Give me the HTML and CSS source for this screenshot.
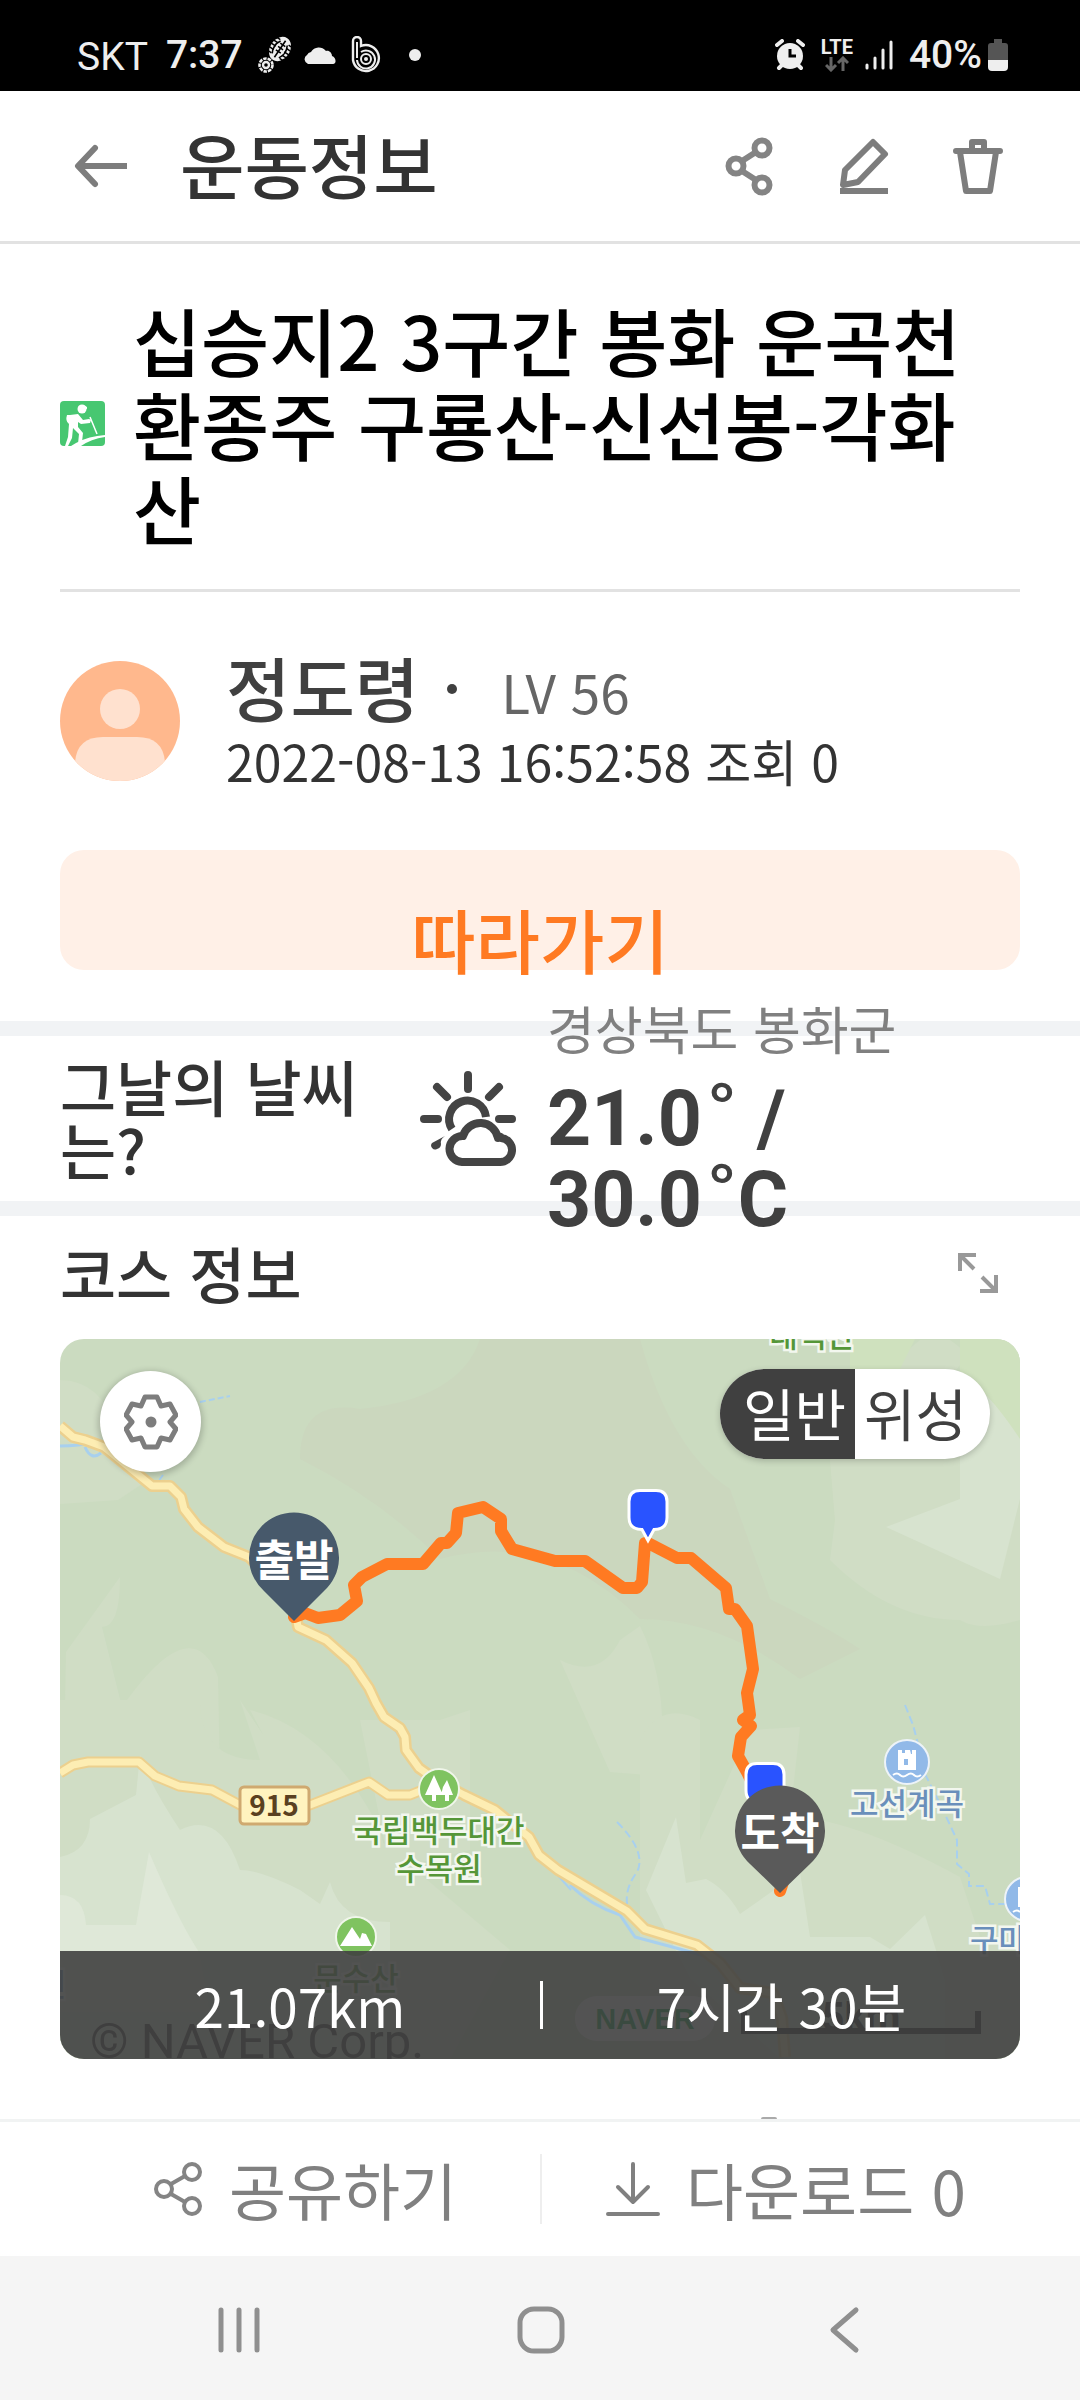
FILE: index.html
```html
<!DOCTYPE html>
<html lang="ko">
<head>
<meta charset="utf-8">
<meta name="viewport" content="width=device-width, initial-scale=1">
<title>운동정보</title>
<link rel="stylesheet" href="styles.css">
</head>
<body>
<div class="app">
  <div class="status">
    <div class="status-group">
      <span class="carrier">SKT</span>
      <span class="clock">7:37</span>
      <svg class="foot" width="36" height="38" viewBox="0 0 36 38" aria-hidden="true">
        <g transform="rotate(34 23 13)">
          <ellipse cx="23" cy="13" rx="10" ry="13" fill="#eee"/>
          <path d="M23 3v20M19 6c-3 5-3 10 0 15M27 6c3 5 3 10 0 15" stroke="#000" stroke-width="1.6" fill="none"/>
          <path d="M12 5h6M12 9h6M12 13h6M12 17h6M12 21h6M28 5h6M28 9h6M28 13h6M28 17h6M28 21h6M20 8h6M20 12h6M20 16h6" stroke="#000" stroke-width="1.5"/>
        </g>
        <circle cx="9" cy="29" r="6.500" fill="none" stroke="#eee" stroke-width="2.600" stroke-dasharray="3.500 1"/>
        <circle cx="9" cy="29" r="3" fill="none" stroke="#eee" stroke-width="2.400"/>
      </svg>
      <svg class="cloud" width="34" height="20" viewBox="0 0 34 20" aria-hidden="true"><path d="M5 19a5 5 0 0 1-1-9 5 5 0 0 1 4-3 9 9 0 0 1 15-1c3-1 6 2 6 5 4 1 5 8 1 8z" fill="#eee"/></svg>
      <svg class="band" width="30" height="38" viewBox="0 0 30 38" fill="none" stroke="#eee" aria-hidden="true">
        <path d="M2 24V5a3.500 3.500 0 0 1 8 0v5a13 13 0 1 1-8 14z" stroke-width="2.400"/>
        <path d="M6 22V6M10 16a9 9 0 1 1-4 8" stroke-width="2"/>
        <circle cx="15" cy="23" r="5" stroke-width="2"/><circle cx="15" cy="23" r="2" fill="#eee" stroke="none"/>
      </svg>
      <span class="more-dot"></span>
    </div>
    <div class="status-group">
      <svg width="30" height="32" viewBox="0 0 30 32" aria-hidden="true">
        <circle cx="15" cy="17" r="13" fill="#eee"/>
        <path d="M2 6l5-4M28 6l-5-4M4 29l4-4M26 29l-4-4" stroke="#eee" stroke-width="4" stroke-linecap="round"/>
        <path d="M15 10v7h6" stroke="#000" stroke-width="3" fill="none"/>
      </svg>
      <span class="lte">LTE
        <svg width="24" height="16" viewBox="0 0 24 16" fill="none" stroke="#666" stroke-width="3" aria-hidden="true"><path d="M6 1v13M1 9l5 5 5-5M18 15V2M13 7l5-5 5 5"/></svg>
      </span>
      <svg class="bars" width="28" height="30" viewBox="0 0 28 30" stroke="#eee" stroke-width="3" stroke-linecap="round" aria-hidden="true"><path d="M2 25v3M10 18v10M18 10v18M26 2v26"/></svg>
      <span class="clock">40%</span>
      <svg class="battery" width="20" height="32" viewBox="0 0 20 32" aria-hidden="true"><path d="M6 0h8v4h3q3 0 3 3v15H0V7q0-3 3-3h3z" fill="#555"/><path d="M0 21h20v7q0 4-4 4H4q-4 0-4-4z" fill="#eee"/></svg>
    </div>
  </div>

  <header class="header">
    <button class="icon-btn" aria-label="뒤로">
      <svg width="56" height="56" viewBox="0 0 56 56" fill="none" stroke="#7d7d7d" stroke-width="6" stroke-linecap="round" stroke-linejoin="round"><path d="M23 10L6 28l17 18"/><path d="M6 28h49" stroke-linecap="butt"/></svg>
    </button>
    <h1>운동정보</h1>
    <div class="header-actions">
      <button class="icon-btn" aria-label="공유">
        <svg width="56" height="60" viewBox="0 0 56 60" fill="none" stroke="#848484" stroke-width="6"><circle cx="40" cy="12" r="7.500"/><circle cx="14" cy="30" r="7.500"/><circle cx="40" cy="49" r="7.500"/><path d="M20 25l14-9M20 35l14 9"/></svg>
      </button>
      <button class="icon-btn" aria-label="편집">
        <svg width="56" height="60" viewBox="0 0 56 60" fill="none" stroke="#7d7d7d" stroke-width="6" stroke-linejoin="round"><path d="M37 6l12 12-27 28-15 3 2-15z"/><path d="M4 55h48"/></svg>
      </button>
      <button class="icon-btn" aria-label="삭제">
        <svg width="56" height="60" viewBox="0 0 56 60" fill="none" stroke="#7d7d7d" stroke-width="6" stroke-linejoin="round" stroke-linecap="round"><path d="M6 15h44M10 16l6 39h24l6-39M22 13V6h12v7"/></svg>
      </button>
    </div>
  </header>

  <main>
    <section class="intro">
      <div class="title-row">
        <svg class="hike" width="45" height="45" viewBox="0 0 45 45" aria-hidden="true">
          <rect width="45" height="45" rx="4" fill="#47c771"/>
          <circle cx="22" cy="8" r="4.500" fill="#fff"/><path d="M18 6q4-4 9 0v2z" fill="#fff"/>
          <path d="M10 14l8-1 5 6 6-1 2 1-1 3-9 1-3-2v5l5 6-1 9-4 2 1-10-6-6-1 10-4 8h-3l3-9 1-13q-4-3-2-9z" fill="#fff"/>
          <path d="M30 16l7 17" stroke="#fff" stroke-width="1.500"/>
          <path d="M11 45l5-3q13-7 29-8v2q-14 2-24 9z" fill="#fff"/>
        </svg>
        <h2>십승지2 3구간 봉화 운곡천 환종주 구룡산-신선봉-각화산</h2>
      </div>
      <div class="author">
        <svg width="120" height="120" viewBox="0 0 120 120" aria-hidden="true">
          <defs><clipPath id="face"><circle cx="60" cy="60" r="60"/></clipPath></defs>
          <g clip-path="url(#face)"><rect width="120" height="120" fill="#ffb88d"/><circle cx="60" cy="48" r="20" fill="#ffe1cf"/><path d="M15 120V101q2-25 28-25h34q26 0 28 25v19z" fill="#ffe1cf"/></g>
        </svg>
        <div class="author-text">
          <div class="author-line"><strong>정도령</strong><span class="sep"></span><span class="level">LV 56</span></div>
          <div class="date">2022-08-13 16:52:58 조회 0</div>
        </div>
      </div>
      <button class="follow">따라가기</button>
    </section>

    <section class="weather">
      <h3>그날의 날씨는?</h3>
      <svg class="sun" width="98" height="98" viewBox="0 0 98 98" fill="none" stroke="#444" stroke-width="8" stroke-linecap="round" aria-hidden="true">
        <path d="M49 5v14M18 17l10 10M80 17L70 27M5 49h14M80 49h13"/>
        <path d="M33 59a18.500 18.500 0 1 1 34-12" stroke-linecap="butt"/>
        <path d="M26 66q-5 3-4 8 0 4-4 5a4 4 0 0 1-5-6z" fill="#444" stroke="none"/>
        <path d="M43 92h37a12 12 0 0 0 2-24 1 1 0 0 0-3 0 18 18 0 0 0-35-2 13 13 0 0 0-1 26z" stroke-linejoin="round"/>
      </svg>
      <div class="forecast">
        <div class="region">경상북도 봉화군</div>
        <div class="temps">21.0<span class="deg">˚</span> /<br>30.0<span class="deg">˚</span>C</div>
      </div>
    </section>

    <section class="course">
      <div class="course-head">
        <h3>코스 정보</h3>
        <button class="icon-btn" aria-label="크게 보기">
          <svg width="40" height="40" viewBox="0 0 40 40" fill="none" stroke="#999" stroke-width="4"><path d="M2 18V2h16M2 2l14 14M38 22v16H22M38 38L24 24"/></svg>
        </button>
      </div>
      <div class="map">
        <svg class="map-canvas" viewBox="60 1339 960 720" role="img" aria-label="코스 지도">
          <rect x="60" y="1339" width="960" height="720" fill="#cbdbc0"/>
          <g fill="#cbd7be">
            <path d="M420 1339h220q30 110 90 150l40 110q60 30 90 50l-60 30q-80-60-160-60-90-90-200-60-60-60-140-100 0-60 60-50 100-10 120-70z"/>
          </g>
          <g fill="#d0ddc5">
            <path d="M60 1380q40 0 58 50l30 50-30 20-58 4zM66 1652l54-75q0 50-18 50l20 80q70-100 96-30l4 200-100 80-60-80zM830 1460l5 60-5 40q60 60 130 60 20 12 60 0v-200q-40-60-70-80h-30l-60 50zM560 1660q40 20 60-20l20-14q30 60 20 150l-50-4zM900 1440l80-100h40v120z"/>
            <path d="M60 1700h140q0 60 60 60l-20-60 80 120 60 20 130 110-60 110H60zM360 1720h80l30-10v140l-80 20zM640 1740q20-40 60-20v120l50-110 50-3-10 90q60 0 170 60l20 60 40-10v152H640zM250 1710q80 20 130 120l20 80-60-30z"/>
          </g>
          <g fill="#d7e3cf">
            <path d="M90 1819l46-24 4-40q10 30 40 75 40-20 60 40 20 0 60 20l20 14 10-22q10 40 60 40v137H60v-202q30-6 30-38zM646 1890l30-73 10 66 20-4q20 10 34 35l60-42 10 65h60l20 12 35-34 20 64v80H780l-90-80zM886 1527l74-28v-100q40-40 60-20v120l-20 80z"/>
          </g>
          <path fill="#dfe8d8" d="M60 1895q24 0 26 30h50l13-73q30 70 50 100l10 60H60z"/>
          <path fill="#cfe1be" d="M850 1339h65l-20 40q-30 10-45-10zM960 1339h60v100q-40-60-60-60z"/>

          <g fill="none" stroke="#a8d0ee" stroke-width="2">
            <path d="M60 1446q20 0 33-4M85 1447q6 14 16 6" stroke-width="3"/>
            <path d="M200 1402l30-6M163 1475l-6 8" stroke-dasharray="6 3"/>
            <path d="M375 1705q20 25 32 42M465 1797l22 14M535 1850l36 40"/>
            <path d="M570 1885q20 20 50 30l15 22q60 16 80 22" stroke-width="3"/>
            <path d="M617 1822q30 30 20 50-15 20-8 40M905 1705l8 20 4 15 6 30 20 40 14 30v24l12 10v12h16l5 18h20" stroke-dasharray="8 4"/>
          </g>

          <g fill="none" stroke-linejoin="round">
            <path d="M60 1426l13 11 12 3 19 7 48 39h18l11 11 3 12 14 18 26 20 25 10 45 45 4 25 28 13 26 23 17 25 7 15 8 14 16 11 5 9 1 13 13 18 17 12 28 15 31 15 34 27 10 18 19 15 69 41 18 18 52 16 23 18 20 25 33 5 9 25 3 39" stroke="#ecd08e" stroke-width="12"/>
            <path d="M60 1773l13-8 15-3h51l16 14 24 10 33 4 28 15h70l59-23 19 13h22l15-6" stroke="#ecd08e" stroke-width="11"/>
            <path d="M60 1426l13 11 12 3 19 7 48 39h18l11 11 3 12 14 18 26 20 25 10 45 45 4 25 28 13 26 23 17 25 7 15 8 14 16 11 5 9 1 13 13 18 17 12 28 15 31 15 34 27 10 18 19 15 69 41 18 18 52 16 23 18 20 25 33 5 9 25 3 39" stroke="#fdedb3" stroke-width="7"/>
            <path d="M60 1773l13-8 15-3h51l16 14 24 10 33 4 28 15h70l59-23 19 13h22l15-6" stroke="#fdedb3" stroke-width="7"/>
          </g>
          <rect x="240" y="1787" width="69" height="37" rx="4" fill="#fff3bf" stroke="#cfa970" stroke-width="3"/>
          <text class="road-no" x="274" y="1816">915</text>

          <circle cx="439" cy="1789" r="20" fill="#7fc360" stroke="#f0f6ea" stroke-width="2"/>
          <path fill="#fff" d="M434 1775l9 20h-7v6h-4v-6h-7zM447 1780l6 15h-4v6h-4v-6h-4l2-8z"/>
          <circle cx="356" cy="1937" r="20" fill="#7fc360" stroke="#f0f6ea" stroke-width="2"/>
          <path fill="#fff" d="M340 1946l12-19 8 12 2-6 4 1 6 12z"/>
          <g class="poi green">
            <text x="439" y="1842">국립백두대간</text>
            <text x="439" y="1880">수목원</text>
            <text x="356" y="1990">문수산</text>
            <text x="812" y="1347">태백산</text>
          </g>
          <g fill="#91b9e8" stroke="#edf3f8" stroke-width="2"><circle cx="907" cy="1762" r="22"/><circle cx="1027" cy="1899" r="22"/></g>
          <g fill="#fff"><path d="M898 1750h4v3h3v-3h5l1 4h1v-4h4v20h-18z"/><path d="M1018 1887h18v20h-18z"/></g>
          <path d="M893 1775q4-3 7 0t7 0 7 0 7 0M1013 1912q4-3 7 0" fill="none" stroke="#fff" stroke-width="2"/>
          <rect x="904" y="1759" width="4" height="6" fill="#91b9e8"/>
          <g class="poi blue">
            <text x="907" y="1815">고선계곡</text>
            <text x="1027" y="1951">구마계곡</text>
            <text x="52" y="1996">원</text>
          </g>

          <rect x="575" y="1996" width="140" height="45" rx="22" fill="#fff"/>
          <text class="naver" x="645" y="2029">NAVER</text>
          <path d="M744 2011v20h234v-20" fill="none" stroke="#222" stroke-width="6"/>
          <text class="scale" x="861" y="2031">5km</text>
          <text class="copyright" x="90" y="2058">© NAVER Corp.</text>

          <path d="M294 1617l11-4 13 5 22-3 17-14-3-16 8-8 25-13h36l18-21h6l9-10 2-20 25-6 18 12v12l11 18 43 12h30l38 27h14l5-6 3-39h3l29 15h14l35 30 3 21h6l12 17 6 43-6 24 3 22-7 5 8 6-10 11-3 19 9 16L775 1830L783 1882L780 1891" fill="none" stroke="#ff7a22" stroke-width="12" stroke-linejoin="round" stroke-linecap="round"/>
          <g fill="#2953ff" stroke="#fff" stroke-width="3">
            <path d="M640 1490.500h16q11 0 11 11v16q0 12-13 12l-6 11-6-11q-13 0-13-12v-16q0-11 11-11z"/>
            <path d="M757 1763.500h16q11 0 11 11v16q0 12-13 12l-6 11-6-11q-13 0-13-12v-16q0-11 11-11z"/>
          </g>
          <path d="M294 1621l-30-30a45 45 0 1 1 60 0z" fill="#47596b"/>
          <text class="pin" x="294" y="1576">출발</text>
          <path d="M780 1893l-30-29a45 45 0 1 1 60 0z" fill="#5a5a5a"/>
          <text class="pin" x="780" y="1849">도착</text>
        </svg>
        <button class="settings" aria-label="지도 설정">
          <svg width="54" height="56" viewBox="-27 -28 54 56" fill="none" stroke="#7d7d7d" stroke-width="5" stroke-linejoin="round"><path d="M-6-25H6l4 9 9-2 6 11-6 7 6 7-6 11-9-2-4 9H-6l-4-9-9 2-6-11 6-7-6-7 6-11 9 2z"/><circle r="5.500" fill="#7d7d7d" stroke="none"/></svg>
        </button>
        <div class="layers">
          <button class="layer on" aria-pressed="true">일반</button><button class="layer" aria-pressed="false">위성</button>
        </div>
        <div class="summary"><span>21.07km</span><span>7시간 30분</span></div>
      </div>
      <span class="next-peek"></span>
    </section>
  </main>

  <div class="actions">
    <button class="action">
      <svg width="50" height="56" viewBox="0 0 50 56" fill="none" stroke="#848484" stroke-width="4" aria-hidden="true"><circle cx="39" cy="11" r="8"/><circle cx="11" cy="28" r="8"/><circle cx="39" cy="45" r="8"/><path d="M18 23l14-8M18 33l14 8"/></svg>
      공유하기
    </button>
    <button class="action">
      <svg width="54" height="56" viewBox="0 0 54 56" fill="none" stroke="#808080" stroke-width="4" stroke-linecap="round" stroke-linejoin="round" aria-hidden="true"><path d="M27 3v38M12 26l15 15 15-15M2 53h50"/></svg>
      다운로드 0
    </button>
  </div>
  <nav class="sysnav" aria-label="시스템">
    <button class="icon-btn" aria-label="최근 앱"><svg width="48" height="48" viewBox="0 0 48 48" stroke="#8f8f8f" stroke-width="5" stroke-linecap="round"><path d="M6 4v40M24 4v40M42 4v40"/></svg></button>
    <button class="icon-btn" aria-label="홈"><svg width="48" height="48" viewBox="0 0 48 48" fill="none" stroke="#8f8f8f" stroke-width="5"><rect x="3" y="3" width="42" height="42" rx="14"/></svg></button>
    <button class="icon-btn" aria-label="이전"><svg width="48" height="48" viewBox="0 0 48 48" fill="none" stroke="#8f8f8f" stroke-width="5" stroke-linecap="round" stroke-linejoin="round"><path d="M37 4L14 24l23 20"/></svg></button>
  </nav>
</div>
</body>
</html>
```
FILE: styles.css
```css
* { box-sizing: border-box; }

body {
  margin: 0;
  background: #fff;
  color: #333;
  font-family: "Noto Sans CJK KR", sans-serif;
}

h1, h2, h3 { margin: 0; font-weight: 500; }

button {
  margin: 0;
  padding: 0;
  border: 0;
  background: none;
  color: inherit;
  font: inherit;
}

svg { display: block; flex: none; }

.app { display: flex; flex-direction: column; min-height: 100vh; }

.status {
  display: flex;
  justify-content: space-between;
  align-items: center;
  height: 91px;
  padding: 18px 72px 0 77px;
  background: #000;
  color: #eee;
  font-family: Roboto, sans-serif;
  font-size: 39px;
  line-height: 48px;
}

.status-group { display: flex; align-items: center; }
.carrier { margin: 4px 18px 0 0; }
.clock { font-weight: 500; }
.foot { margin-left: 14px; }
.cloud { margin-left: 10px; }
.band { margin-left: 14px; }
.more-dot { width: 12px; height: 12px; margin-left: 28px; border-radius: 50%; background: #eee; }
.lte { display: flex; flex-direction: column; align-items: center; margin-left: 16px; font-size: 20px; line-height: 18px; font-weight: 700; }
.bars { margin: 0 16px 0 12px; }
.battery { margin-left: 6px; }

.icon-btn { display: flex; align-items: center; justify-content: center; }

.header {
  display: flex;
  align-items: center;
  height: 153px;
  padding: 0 74px 0 72px;
  border-bottom: 3px solid #e2e2e2;
}

.header h1 { margin-left: 52px; padding-bottom: 4px; font-size: 70px; line-height: 84px; }
.header-actions { display: flex; gap: 58px; margin-left: auto; }

.intro { padding: 53px 60px 51px; }

.title-row {
  display: flex;
  align-items: center;
  gap: 28px;
  padding-bottom: 40px;
  border-bottom: 3px solid #e2e2e2;
}

.title-row h2 { flex: 1; color: #000; font-size: 74px; line-height: 84px; }

.author { display: flex; align-items: center; gap: 46px; padding: 55px 0; }
.author-text { padding-bottom: 4px; }
.author-line { display: flex; align-items: center; height: 80px; color: #404040; }
.author-line strong { font-size: 70px; font-weight: 500; line-height: 80px; }
.sep { width: 10px; height: 10px; margin: 4px 44px 0 28px; border-radius: 50%; background: #404040; }
.level { padding-top: 8px; color: #666; font-size: 53px; line-height: 72px; }
.date { padding-top: 2px; font-size: 50px; line-height: 62px; }

.follow {
  display: block;
  width: 100%;
  height: 120px;
  padding-top: 58px;
  border-radius: 24px;
  background: #fff0e7;
  color: #ff7a22;
  font-size: 70px;
  font-weight: 500;
  line-height: 54px;
}

.weather {
  display: flex;
  align-items: center;
  height: 195px;
  padding: 0 60px;
  border: solid #f1f3f5;
  border-width: 15px 0;
}

.weather h3 { flex: 0 0 320px; padding-bottom: 4px; font-size: 61px; line-height: 63px; }
.sun { margin-left: 39px; }
.forecast { margin-left: 30px; padding-bottom: 4px; }
.region { color: #808080; font-size: 52px; line-height: 72px; }
.temps { padding-top: 15px; color: #404040; font-family: Roboto, sans-serif; font-size: 77px; font-weight: 700; line-height: 81px; }
.deg { margin-left: 4px; font-size: 96px; font-weight: 500; line-height: 0; vertical-align: -12px; }

.course { padding: 0 60px; }

.course-head {
  display: flex;
  align-items: center;
  justify-content: space-between;
  height: 123px;
  padding: 0 22px 10px 0;
}

.course-head h3 { font-size: 61px; line-height: 72px; }

.map { position: relative; overflow: hidden; border-radius: 24px; }
.map-canvas { width: 100%; height: auto; font-family: "Noto Sans CJK KR", sans-serif; text-anchor: middle; }
.poi { font-size: 31px; font-weight: 500; stroke: #f3f7ef; stroke-width: 5px; paint-order: stroke; }
.green { fill: #559638; }
.blue { fill: #6a8fbb; }
.road-no { fill: #5a4020; font-size: 28px; font-weight: 700; }
.pin { fill: #fff; font-size: 43px; font-weight: 700; }
.naver { fill: #03a63c; font-family: "Liberation Sans", sans-serif; font-size: 29px; font-weight: 700; }
.scale { fill: #222; font-family: Roboto, sans-serif; font-size: 40px; font-weight: 700; }
.copyright { fill: #333; font-family: Roboto, sans-serif; font-size: 49px; text-anchor: start; }

.settings {
  position: absolute;
  top: 32px;
  left: 40px;
  display: flex;
  align-items: center;
  justify-content: center;
  width: 101px;
  height: 101px;
  border-radius: 50%;
  background: #fff;
  box-shadow: 0 2px 6px 2px rgba(0, 0, 0, .2);
}

.layers {
  position: absolute;
  top: 30px;
  right: 30px;
  display: flex;
  height: 90px;
  overflow: hidden;
  border-radius: 45px;
  background: #fff;
  box-shadow: 0 2px 6px rgba(0, 0, 0, .2);
  color: #404040;
  font-size: 56px;
  line-height: 84px;
  white-space: nowrap;
}

.layer { padding: 0 23px 4px 9px; }
.on { padding: 0 9px 4px 23px; background: #404040; color: #fff; }

.summary {
  position: absolute;
  right: 0;
  bottom: 0;
  left: 0;
  display: grid;
  grid-template-columns: 1fr 1fr;
  align-items: center;
  height: 108px;
  background: rgba(64, 64, 64, .9);
  color: #fff;
  font-size: 53px;
  line-height: 48px;
  text-align: center;
}

.summary span + span { border-left: 3px solid #fff; }

.next-peek { display: block; width: 16px; height: 2px; margin: 58px 0 0 701px; border-radius: 8px 8px 0 0; background: #aaa; }

.actions {
  position: sticky;
  bottom: 0;
  display: grid;
  grid-template-columns: 1fr 1fr;
  align-items: center;
  height: 137px;
  margin-top: auto;
  border-top: 3px solid #f1f3f3;
  background: #fff;
  color: #808080;
  font-size: 62px;
  line-height: 70px;
}

.action { display: flex; align-items: center; justify-content: center; gap: 26px; padding-left: 70px; }
.action + .action { padding: 0 50px 0 0; border-left: 2px solid #eee; }

.sysnav {
  display: flex;
  align-items: center;
  justify-content: space-between;
  height: 144px;
  padding: 4px 213px 0 215px;
  background: #f5f5f5;
}
```
